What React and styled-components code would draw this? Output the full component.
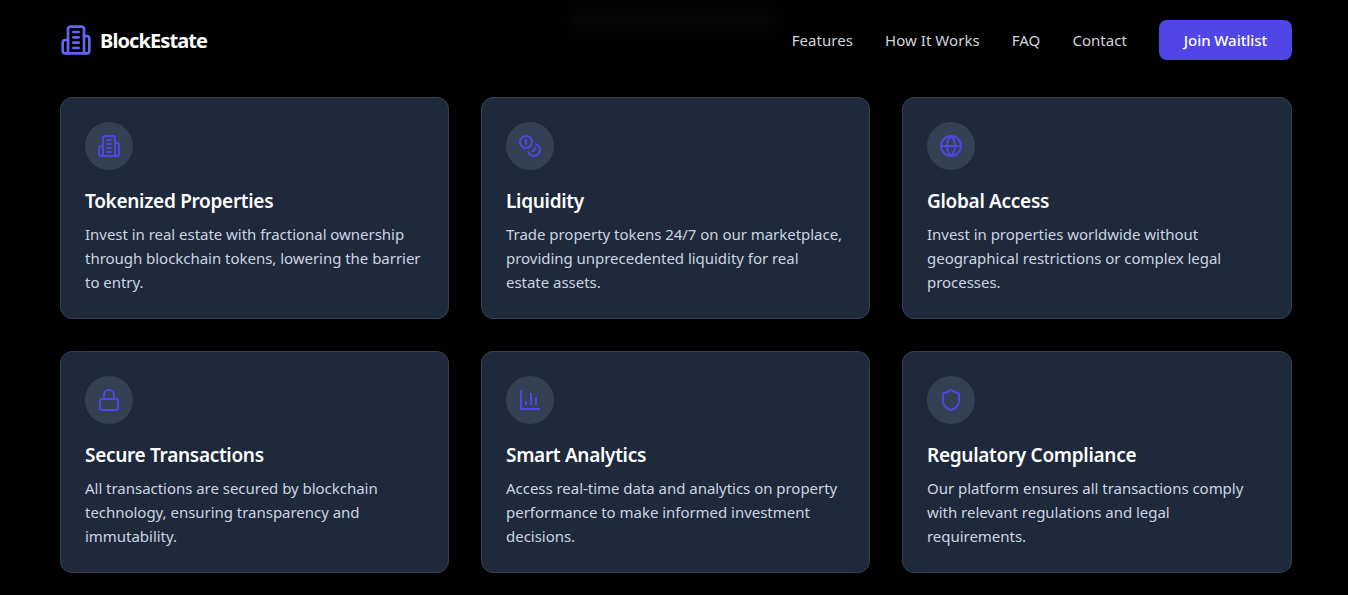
import React from "react";
import styled, { createGlobalStyle } from "styled-components";
import { Coins, Globe, Lock, Shield } from "lucide-react";

const Global = createGlobalStyle`
  html, body { margin: 0; padding: 0; background: #000; height: 595px; overflow: hidden; }
  * { box-sizing: border-box; }
  body { font-family: "Noto Sans", "Open Sans", sans-serif; }
`;

const Page = styled.div`
  position: relative;
  height: 595px;
  padding: 0 56px 0 60px;
  background: #000;
  color: #fff;
  overflow: hidden;
`;

const Glow = styled.div`
  position: absolute;
  left: 570px;
  top: 8px;
  width: 205px;
  height: 24px;
  background: #070707;
  filter: blur(9px);
`;

const Header = styled.header`
  position: relative;
  display: flex;
  align-items: center;
  justify-content: space-between;
  height: 80px;
`;

const Brand = styled.div`
  display: flex;
  align-items: center;
  gap: 8px;
  font-size: 20px;
  font-weight: 700;
  letter-spacing: -0.9px;
  color: #fff;
  svg { color: #6366f1; display: block; }
`;

const Nav = styled.nav`
  display: flex;
  align-items: center;
  gap: 32px;
`;

const NavLink = styled.a`
  font-size: 15px;
  color: #d1d5db;
  letter-spacing: 0.05px;
`;

const JoinButton = styled.button`
  width: 133px;
  height: 40px;
  border: 0;
  border-radius: 8px;
  background: #4f46e5;
  color: #fff;
  font: 500 15px "Noto Sans", sans-serif;
  letter-spacing: -0.05px;
`;

const Grid = styled.main`
  display: grid;
  grid-template-columns: 389px 389px 390px;
  gap: 32px;
  margin-top: 17px;
`;

const Card = styled.article`
  height: 222px;
  padding: 24px;
  background: #1e293b;
  border: 1px solid #334155;
  border-radius: 12px;
`;

const IconCircle = styled.div`
  display: flex;
  align-items: center;
  justify-content: center;
  width: 48px;
  height: 48px;
  border-radius: 50%;
  background: #334155;
  color: #4f46e5;
  margin-bottom: 17px;
  svg { display: block; }
`;

const Title = styled.h3`
  margin: 0 0 7px;
  font-size: 19px;
  line-height: 28px;
  font-weight: 600;
  letter-spacing: -0.3px;
  color: #fff;
`;

const Body = styled.p`
  margin: 0;
  font-size: 15px;
  line-height: 24px;
  letter-spacing: -0.03px;
  color: #cbd5e1;
`;

const BuildingIcon = ({ size = 24 }) => (
  <svg width={size} height={size} viewBox="0 0 24 24" fill="none" stroke="currentColor" strokeWidth="2" strokeLinecap="round" strokeLinejoin="round">
    <path d="M6 22V4a2 2 0 0 1 2-2h8a2 2 0 0 1 2 2v18Z" />
    <path d="M6 12H4a2 2 0 0 0-2 2v6a2 2 0 0 0 2 2h2" />
    <path d="M18 9h2a2 2 0 0 1 2 2v9a2 2 0 0 1-2 2h-2" />
    <path d="M10 6h4" />
    <path d="M10 10h4" />
    <path d="M10 14h4" />
    <path d="M10 18h4" />
  </svg>
);

const ChartIcon = () => (
  <svg width="24" height="24" viewBox="0 0 24 24" fill="none" stroke="currentColor" strokeWidth="2">
    <path d="M3 2v19h19" />
    <path d="M18 17V9" />
    <path d="M13 17V5" />
    <path d="M8 17v-4" />
  </svg>
);

const features = [
  { icon: <BuildingIcon />, title: "Tokenized Properties", text: "Invest in real estate with fractional ownership through blockchain tokens, lowering the barrier to entry." },
  { icon: <Coins size={24} />, title: "Liquidity", text: "Trade property tokens 24/7 on our marketplace, providing unprecedented liquidity for real estate assets." },
  { icon: <Globe size={24} />, title: "Global Access", text: "Invest in properties worldwide without geographical restrictions or complex legal processes." },
  { icon: <Lock size={24} />, title: "Secure Transactions", text: "All transactions are secured by blockchain technology, ensuring transparency and immutability." },
  { icon: <ChartIcon />, title: "Smart Analytics", text: "Access real-time data and analytics on property performance to make informed investment decisions." },
  { icon: <Shield size={24} />, title: "Regulatory Compliance", text: "Our platform ensures all transactions comply with relevant regulations and legal requirements." },
];

export default function App() {
  return (
    <Page>
      <Global />
      <Glow />
      <Header>
        <Brand>
          <BuildingIcon size={32} />
          BlockEstate
        </Brand>
        <Nav>
          <NavLink>Features</NavLink>
          <NavLink>How It Works</NavLink>
          <NavLink>FAQ</NavLink>
          <NavLink>Contact</NavLink>
          <JoinButton>Join Waitlist</JoinButton>
        </Nav>
      </Header>
      <Grid>
        {features.map((f) => (
          <Card key={f.title}>
            <IconCircle>{f.icon}</IconCircle>
            <Title>{f.title}</Title>
            <Body>{f.text}</Body>
          </Card>
        ))}
      </Grid>
    </Page>
  );
}
